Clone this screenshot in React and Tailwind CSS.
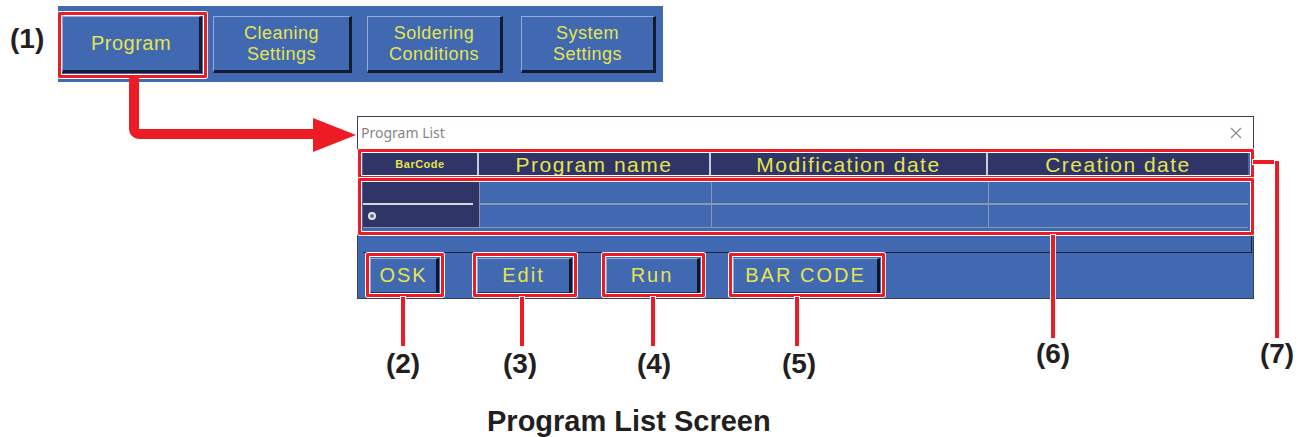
import React from 'react';

const tabs = [
  { lines: ['Program'], w: 'w-[140px]', ml: 'ml-[4px]', size: 'text-[20px]', active: true },
  { lines: ['Cleaning', 'Settings'], w: 'w-[139px]', ml: 'ml-[11px]', size: 'text-[18px]' },
  { lines: ['Soldering', 'Conditions'], w: 'w-[136px]', ml: 'ml-[15px]', size: 'text-[18px]' },
  { lines: ['System', 'Settings'], w: 'w-[135px]', ml: 'ml-[18px]', size: 'text-[18px]' },
];

const actions = [
  { label: 'OSK', w: 'w-[69px]', ml: 'ml-[12px]' },
  { label: 'Edit', w: 'w-[95px]', ml: 'ml-[38px]' },
  { label: 'Run', w: 'w-[94px]', ml: 'ml-[34px]' },
  { label: 'BAR CODE', w: 'w-[147px]', ml: 'ml-[33px]' },
];

// callout lines below the window: [left, top, height]
const drops = [
  { cls: 'left-[401px] top-[297px] h-[49px]' },
  { cls: 'left-[520px] top-[297px] h-[49px]' },
  { cls: 'left-[651px] top-[297px] h-[49px]' },
  { cls: 'left-[795px] top-[297px] h-[49px]' },
  { cls: 'left-[1051px] top-[235px] h-[103px]' },
  { cls: 'left-[1275px] top-[161px] h-[177px]' },
];

const labels = [
  { text: '(2)', cls: 'left-[373px] top-[350px]' },
  { text: '(3)', cls: 'left-[490px] top-[350px]' },
  { text: '(4)', cls: 'left-[624px] top-[350px]' },
  { text: '(5)', cls: 'left-[769px] top-[350px]' },
  { text: '(6)', cls: 'left-[1023px] top-[340px]' },
  { text: '(7)', cls: 'left-[1247px] top-[340px]' },
];

function RedBox({ className }) {
  return (
    <div
      className={`absolute border-[3px] border-[#ed1c24] rounded-[2px] shadow-[inset_0_0_0_1px_#ffffff,0_0_0_1px_#ffffff] pointer-events-none ${className}`}
    />
  );
}

function Tab({ tab }) {
  return (
    <div className={`relative h-[57px] ${tab.w} ${tab.ml}`}>
      <div className="h-full w-full flex flex-col items-center justify-center bg-[#4169b2] border-t border-l border-[#93acd9] border-r-[3px] border-b-[3px] border-r-[#151a30] border-b-[#151a30] text-[#e6e44f] leading-[21px] tracking-[0.5px]">
        {tab.lines.map((l) => (
          <span key={l} className={tab.size}>{l}</span>
        ))}
      </div>
      {tab.active && <RedBox className="-top-[4px] -left-[4px] -right-[5px] -bottom-[5px]" />}
    </div>
  );
}

export default function App() {
  const cols = ['w-[116px]', 'w-[232px]', 'w-[277px]', 'w-[260px]'];

  return (
    <div className="relative w-[1306px] h-[437px] bg-white overflow-hidden font-['Liberation_Sans',Arial,sans-serif]">
      {/* menu bar */}
      <div className="ml-[58px] mt-[6px] w-[605px] h-[76px] bg-[#4169b2] flex items-start pt-[10px]">
        {tabs.map((t) => (
          <Tab key={t.lines[0]} tab={t} />
        ))}
      </div>

      {/* program list window */}
      <div className="ml-[357px] mt-[34px] w-[897px] h-[183px] border border-[#3a4058] bg-[#4169b2] flex flex-col">
        <div className="h-[32px] bg-white border-b border-[#cfcfcf] flex items-center justify-between pl-[3px] pr-[11px]">
          <span className="text-[14px] text-[#858585] font-['Noto_Sans','Liberation_Sans',sans-serif] leading-none">Program List</span>
          <svg width="12" height="12" viewBox="0 0 12 12">
            <path d="M1 1 L11 11 M11 1 L1 11" stroke="#8a8a8a" strokeWidth="1.2" />
          </svg>
        </div>

        <div className="pt-[4px]">
          <div className="relative ml-[5px] w-[889px] h-[100px] border-r border-b border-[#1c2238]">
            {/* header */}
            <div className="flex h-[23px] w-[885px] bg-[#2f3566] text-[#e6e44f]">
              <div className={`${cols[0]} flex items-center justify-center text-[11px] font-bold tracking-[0.5px] border-r-2 border-[#c9cbd6]`}>BarCode</div>
              <div className={`${cols[1]} flex items-center justify-center text-[21px] tracking-[1.5px] border-r-2 border-[#c9cbd6]`}>Program name</div>
              <div className={`${cols[2]} flex items-center justify-center text-[21px] tracking-[1.5px] border-r-2 border-[#c9cbd6]`}>Modification date</div>
              <div className={`${cols[3]} flex items-center justify-center text-[21px] tracking-[1.5px]`}>Creation date</div>
            </div>

            {/* data rows */}
            <div className="mt-[6px] w-[885px] border-b border-[#8d96b0]">
              <div className="flex h-[21px]">
                <div className={`${cols[0]} bg-[#2f3566]`} />
                <div className={`${cols[1]} border-l border-[#8d96b0]`} />
                <div className={`${cols[2]} border-l border-[#8d96b0]`} />
                <div className={`${cols[3]} border-l border-[#8d96b0]`} />
              </div>
              <div className="flex h-[2px]">
                <div className="w-[110px] bg-[#d6d8e0]" />
                <div className="w-[6px] bg-[#2f3566]" />
                <div className="flex-1 bg-[#8d96b0]" />
              </div>
              <div className="flex h-[22px]">
                <div className={`${cols[0]} bg-[#2f3566] flex items-center pl-[5px]`}>
                  <span className="w-[8px] h-[8px] rounded-full bg-[#6a6e7c] border-2 border-[#e2e4ea]" />
                </div>
                <div className={`${cols[1]} border-l border-[#8d96b0]`} />
                <div className={`${cols[2]} border-l border-[#8d96b0]`} />
                <div className={`${cols[3]} border-l border-[#8d96b0]`} />
              </div>
            </div>

            <RedBox className="-top-[4px] -left-[5px] -right-[3px] h-[30px]" />
            <RedBox className="top-[25px] -left-[5px] -right-[3px] h-[57px]" />
          </div>

          {/* button row */}
          <div className="flex items-center h-[44px]">
            {actions.map((a) => (
              <div key={a.label} className={`relative h-[35px] ${a.w} ${a.ml}`}>
                <div className="h-full w-full flex items-center justify-center bg-[#4169b2] border-t border-l border-[#93acd9] border-r-[3px] border-b border-r-[#10142a] border-b-[#2a3150] text-[#e6e44f] text-[20px] tracking-[2px]">
                  {a.label}
                </div>
                <RedBox className="-top-[5px] -left-[4px] -right-[5px] -bottom-[4px]" />
              </div>
            ))}
          </div>
        </div>
      </div>

      {/* caption */}
      <div className="ml-[487px] mt-[108px] text-[29px] leading-[29px] font-bold text-[#231f20] whitespace-nowrap">
        Program List Screen
      </div>

      {/* arrow from Program tab to window */}
      <svg className="absolute left-[120px] top-[70px]" width="240" height="90" viewBox="0 0 240 90">
        <path d="M14 8 V58 Q14 64 20 64 H196" fill="none" stroke="#ed1c24" strokeWidth="10" />
        <polygon points="193,48 236,65 193,82" fill="#ed1c24" />
      </svg>

      {/* callout lines */}
      <div className="absolute left-[1253px] top-[160px] w-[26px] h-[4px] bg-[#ed1c24] shadow-[0_0_0_1px_#ffffff]" />
      {drops.map((d, i) => (
        <div key={i} className={`absolute w-[4px] bg-[#ed1c24] shadow-[0_0_0_1px_#ffffff] ${d.cls}`} />
      ))}

      {/* number labels */}
      <div className="absolute left-[10px] top-[25px] text-[28px] leading-[28px] font-bold text-[#231f20]">(1)</div>
      {labels.map((l) => (
        <div key={l.text} className={`absolute w-[60px] text-center text-[28px] leading-[28px] font-bold text-[#231f20] ${l.cls}`}>
          {l.text}
        </div>
      ))}
    </div>
  );
}
